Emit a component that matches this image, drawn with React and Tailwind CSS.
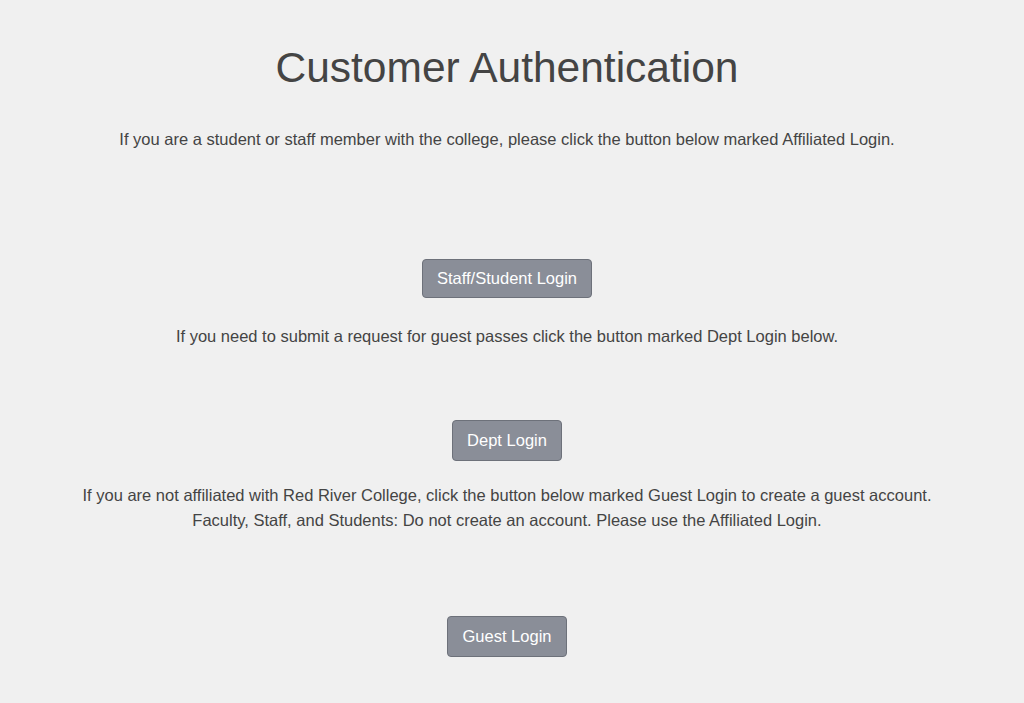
export default function App() {
    return (
        <div className="min-h-[703px] bg-[#f0f0f0] text-[#444] font-['Liberation_Sans',Arial,sans-serif] flex flex-col items-center text-center pr-[10px]">
            <h1 className="mt-[44px] text-[42.5px] leading-[48px] text-[#444]">
                Customer Authentication
            </h1>

            <p className="mt-[35px] text-[16.5px] leading-[24px]">
                If you are a student or staff member with the college, please click the button below marked Affiliated Login.
            </p>
            <button
                type="button"
                className="mt-[108px] h-[39px] px-[14px] rounded-[4px] border border-[#6d717a] bg-[#8a8e98] text-white text-[16.5px]"
            >
                Staff/Student Login
            </button>

            <p className="mt-[26px] text-[16.5px] leading-[24px]">
                If you need to submit a request for guest passes click the button marked Dept Login below.
            </p>
            <button
                type="button"
                className="mt-[72px] h-[41px] px-[14px] rounded-[4px] border border-[#6d717a] bg-[#8a8e98] text-white text-[16.5px]"
            >
                Dept Login
            </button>

            <p className="mt-[22px] text-[16.5px] leading-[25px]">
                If you are not affiliated with Red River College, click the button below marked Guest Login to create a guest account.
                <br />
                Faculty, Staff, and Students: Do not create an account. Please use the Affiliated Login.
            </p>
            <button
                type="button"
                className="mt-[83px] h-[41px] px-[15px] rounded-[4px] border border-[#6d717a] bg-[#8a8e98] text-white text-[16.5px]"
            >
                Guest Login
            </button>
        </div>
    );
}
